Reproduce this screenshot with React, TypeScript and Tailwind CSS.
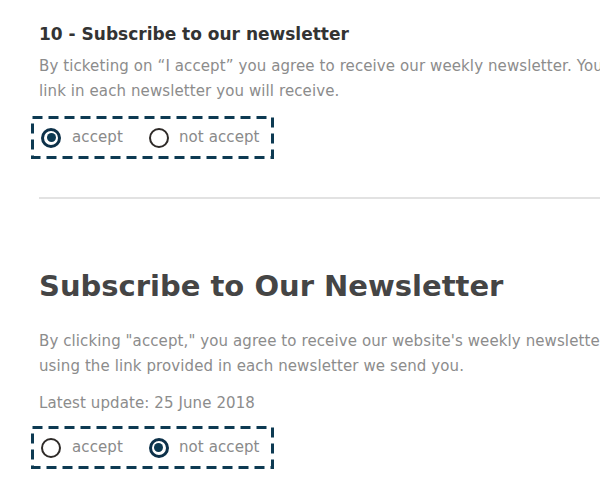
import React from "react";

function Radio({ checked }: { checked: boolean }) {
  return checked ? (
    <span className="w-5 h-5 rounded-full border-[3px] border-[#0d3149] flex items-center justify-center shrink-0 bg-white">
      <span className="w-[9px] h-[9px] rounded-full bg-[#0d3a52]" />
    </span>
  ) : (
    <span className="w-5 h-5 rounded-full border-2 border-[#2e2a28] shrink-0 bg-white" />
  );
}

function Choice({ first }: { first: boolean }) {
  return (
    <div className="relative ml-[-8px] w-[243px] h-[43px] flex items-center pl-[10px]">
      <svg className="absolute inset-0 pointer-events-none" width="243" height="43" viewBox="0 0 243 43">
        <rect
          x="1.5"
          y="1.5"
          width="240"
          height="40"
          fill="none"
          stroke="#0d3a52"
          strokeWidth="3"
          strokeDasharray="10 6"
        />
      </svg>
      <label className="flex items-center">
        <Radio checked={first} />
        <span className="ml-[11px] text-[15px] tracking-[0.1px] text-[#8a8a8a]">accept</span>
      </label>
      <label className="flex items-center ml-[26px]">
        <Radio checked={!first} />
        <span className="ml-[10px] text-[15px] tracking-[0.1px] text-[#8a8a8a]">not accept</span>
      </label>
    </div>
  );
}

export default function App() {
  return (
    <div
      className="w-[600px] h-[500px] overflow-hidden bg-white pl-[39px]"
      style={{ fontFamily: '"DejaVu Sans", sans-serif' }}
    >
      <h3 className="pt-[22px] text-[17px] leading-[24px] font-bold text-[#333333] whitespace-nowrap">
        10 - Subscribe to our newsletter
      </h3>
      <p className="mt-[8px] text-[15px] leading-[25px] tracking-[0.1px] text-[#8c8c8c] whitespace-nowrap">
        By ticketing on “I accept” you agree to receive our weekly newsletter. You can unsubscribe at any time using the
        <br />
        link in each newsletter you will receive.
      </p>
      <div className="mt-[12px]">
        <Choice first={true} />
      </div>
      <div className="mt-[38px] h-[2px] bg-[#e2e2e2]" />
      <h2 className="mt-[67px] text-[29px] leading-[40px] font-bold text-[#454545] whitespace-nowrap">
        Subscribe to Our Newsletter
      </h2>
      <p className="mt-[23px] text-[15px] leading-[25px] tracking-[0.1px] text-[#8c8c8c] whitespace-nowrap">
        By clicking "accept," you agree to receive our website's weekly newsletter. You can unsubscribe at any time
        <br />
        using the link provided in each newsletter we send you.
      </p>
      <p className="mt-[12px] text-[15px] leading-[25px] tracking-[0.1px] text-[#8c8c8c] whitespace-nowrap">
        Latest update: 25 June 2018
      </p>
      <div className="mt-[10px]">
        <Choice first={false} />
      </div>
    </div>
  );
}
